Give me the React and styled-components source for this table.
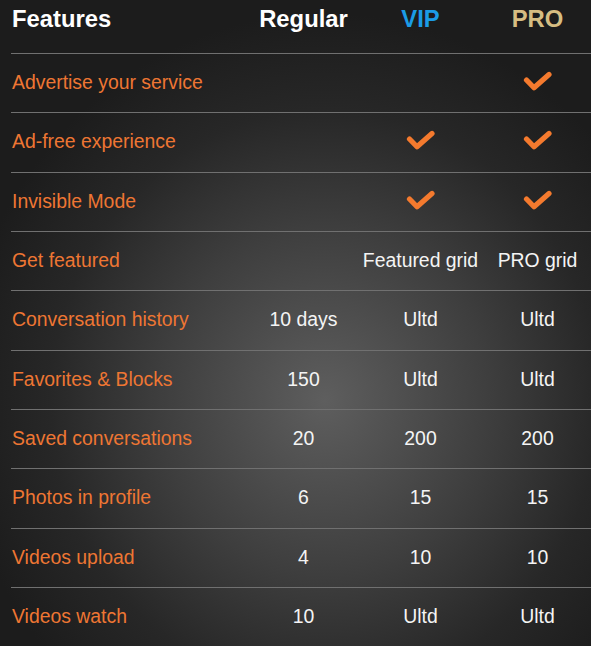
import React from "react";
import styled, { createGlobalStyle } from "styled-components";

const Global = createGlobalStyle`
  html, body { margin: 0; padding: 0; background: #1c1c1c; }
  body { font-family: "Liberation Sans", Arial, sans-serif; overflow: hidden; }
`;

const Page = styled.div`
  width: 100vw;
  height: 100vh;
  overflow: hidden;
  background: radial-gradient(ellipse 62% 60% at 55% 62%, #5e5e5e 0%, #3e3e3e 45%, #272727 75%, #1c1c1c 100%);
`;

const Table = styled.div`
  width: 596px;
  margin-left: 11px;
  display: flex;
  flex-direction: column;
`;

const Row = styled.div`
  display: grid;
  grid-template-columns: 234px 117px 117px 117px;
  box-sizing: border-box;
  height: ${(p) => (p.$head ? "53px" : "59.33px")};
  align-items: ${(p) => (p.$head ? "start" : "center")};
  padding-top: ${(p) => (p.$head ? "5px" : "0")};
  padding-bottom: ${(p) => (p.$head ? "0" : "2px")};
  border-top: ${(p) => (p.$head ? "none" : "1px solid #707070")};
`;

const HeadCell = styled.div`
  font-weight: bold;
  font-size: 23.8px;
  line-height: 28px;
  color: ${(p) => p.$color || "#ffffff"};
  text-align: ${(p) => (p.$left ? "left" : "center")};
  padding-left: ${(p) => (p.$left ? "1px" : "0")};
`;

const Label = styled.div`
  color: #ee7633;
  font-size: 19.4px;
  line-height: 24px;
  padding-left: 1px;
  white-space: nowrap;
`;

const Value = styled.div`
  color: #f4f4f4;
  font-size: 19.4px;
  line-height: 24px;
  text-align: center;
  white-space: nowrap;
  display: flex;
  justify-content: center;
  align-items: center;
`;

const Check = () => (
  <svg width="30" height="22" viewBox="0 0 30 22" style={{ display: "block" }}>
    <path
      d="M3.5 9 L11 16.8 L26 3.5"
      fill="none"
      stroke="#f47a2e"
      strokeWidth="5.2"
      strokeLinecap="round"
      strokeLinejoin="round"
    />
  </svg>
);

const C = "✓";
const rows = [
  ["Advertise your service", "", "", C],
  ["Ad-free experience", "", C, C],
  ["Invisible Mode", "", C, C],
  ["Get featured", "", "Featured grid", "PRO grid"],
  ["Conversation history", "10 days", "Ultd", "Ultd"],
  ["Favorites & Blocks", "150", "Ultd", "Ultd"],
  ["Saved conversations", "20", "200", "200"],
  ["Photos in profile", "6", "15", "15"],
  ["Videos upload", "4", "10", "10"],
  ["Videos watch", "10", "Ultd", "Ultd"],
];

export default function App() {
  return (
    <Page>
      <Global />
      <Table>
        <Row $head>
          <HeadCell $left>Features</HeadCell>
          <HeadCell>Regular</HeadCell>
          <HeadCell $color="#1b9ce6">VIP</HeadCell>
          <HeadCell $color="#d6bd82">PRO</HeadCell>
        </Row>
        {rows.map(([label, ...vals]) => (
          <Row key={label}>
            <Label>{label}</Label>
            {vals.map((v, i) => (
              <Value key={i}>{v === C ? <Check /> : v}</Value>
            ))}
          </Row>
        ))}
      </Table>
    </Page>
  );
}
